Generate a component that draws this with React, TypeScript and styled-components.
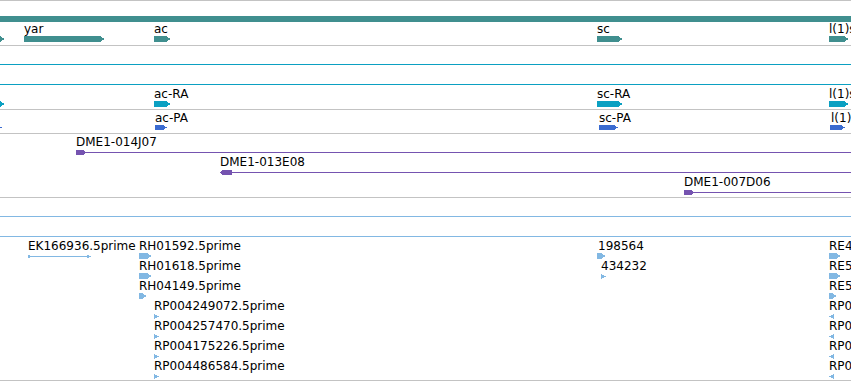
import React from 'react';
import styled, { createGlobalStyle } from 'styled-components';

const C = {
  sep: '#c3c3c3',
  teal: '#408f8f',
  cyan: '#0ba0c2',
  blue: '#3a6bd0',
  purple: '#7553b0',
  est: '#82b8e3',
};

const Global = createGlobalStyle`
  html, body { margin: 0; padding: 0; background: #fff; }
  body { font-family: "DejaVu Sans", Verdana, sans-serif; }
`;

const Viewer = styled.div`
  position: relative;
  width: 851px;
  height: 381px;
  overflow: hidden;
  box-sizing: border-box;
  background: #fff;
  border-top: 1px solid ${C.sep};
`;

const Track = styled.section<{ $pad: number }>`
  display: flex;
  flex-direction: column;
  padding-bottom: ${(p) => p.$pad}px;
  border-bottom: 1px solid ${C.sep};
`;

const Row = styled.div`
  position: relative;
  flex: none;
  height: 20px;
`;

const Feature = styled.div<{ $x: number }>`
  position: absolute;
  top: 0;
  left: ${(p) => p.$x}px;
  display: flex;
  flex-direction: column;
  align-items: flex-start;
`;

const Label = styled.span<{ $dx: number }>`
  display: block;
  height: 12px;
  margin-top: 2px;
  margin-left: ${(p) => p.$dx}px;
  font-size: 12px;
  line-height: 12px;
  color: #000;
  white-space: nowrap;
`;

const GlyphSvg = styled.svg`
  display: block;
  margin-top: 1px;
  overflow: visible;
  shape-rendering: crispEdges;
`;

type Glyph =
  | { kind: 'arrow'; w: number; h?: number; color: string }
  | { kind: 'line'; w: number; color: string }
  | { kind: 'bar'; w: number; color: string }
  | { kind: 'clone'; head: 'flat' | 'left'; color: string }
  | { kind: 'pair'; w: number; color: string }
  | { kind: 'tri'; dir: 'r' | 'l'; color: string };

type Feat = { x: number; label?: string; dx?: number; glyph: Glyph };

function GlyphView({ g }: { g: Glyph }) {
  switch (g.kind) {
    case 'arrow': {
      const h = g.h ?? 6;
      const t = h === 6 ? 5 : 4;
      const pts = `0,0 ${g.w - t},0 ${g.w},${h / 2} ${g.w - t},${h} 0,${h}`;
      return (
        <GlyphSvg width={g.w} height={6} viewBox={`0 0 ${g.w} 6`}>
          <polygon points={pts} fill={g.color} />
        </GlyphSvg>
      );
    }
    case 'bar':
      return (
        <GlyphSvg width={g.w} height={6} viewBox={`0 0 ${g.w} 6`}>
          <rect x={0} y={0} width={g.w} height={6} fill={g.color} />
        </GlyphSvg>
      );
    case 'line':
      return (
        <GlyphSvg width={g.w} height={6} viewBox={`0 0 ${g.w} 6`}>
          <rect x={0} y={3} width={g.w} height={1} fill={g.color} />
        </GlyphSvg>
      );
    case 'clone': {
      const w = 900;
      const head =
        g.head === 'flat' ? '0,1 7,1 11,3.5 7,6 0,6' : '0,3.5 3,1 12,1 12,6 3,6';
      return (
        <GlyphSvg width={w} height={6} viewBox={`0 0 ${w} 6`}>
          <rect x={2} y={3} width={w} height={1} fill={g.color} />
          <polygon points={head} fill={g.color} />
        </GlyphSvg>
      );
    }
    case 'pair':
      return (
        <GlyphSvg width={g.w} height={6} viewBox={`0 0 ${g.w} 6`}>
          <rect x={0} y={3} width={g.w} height={1} fill={g.color} />
          <polygon points="0,1.5 4,3.5 0,5.5" fill={g.color} />
          <polygon points={`${g.w - 4},1.5 ${g.w},3.5 ${g.w - 4},5.5`} fill={g.color} />
        </GlyphSvg>
      );
    case 'tri':
      return (
        <GlyphSvg width={5} height={6} viewBox="0 0 5 6">
          <polygon
            points={g.dir === 'r' ? '0,1 5,3.5 0,6' : '5,1 0,3.5 5,6'}
            fill={g.color}
          />
        </GlyphSvg>
      );
  }
}

function FeatureView({ f }: { f: Feat }) {
  return (
    <Feature $x={f.x}>
      <Label $dx={f.dx ?? 0}>{f.label ?? ''}</Label>
      <GlyphView g={f.glyph} />
    </Feature>
  );
}

type TrackDef = { name: string; pad: number; rows: Feat[][] };

const full = (color: string): Feat => ({ x: 0, glyph: { kind: 'line', w: 851, color } });

const tracks: TrackDef[] = [
  {
    name: 'genes',
    pad: 4,
    rows: [
      [{ x: 0, glyph: { kind: 'bar', w: 851, color: C.teal } }],
      [
        { x: -8, glyph: { kind: 'arrow', w: 13, color: C.teal } },
        { x: 24, label: 'yar', glyph: { kind: 'arrow', w: 81, color: C.teal } },
        { x: 154, label: 'ac', glyph: { kind: 'arrow', w: 17, color: C.teal } },
        { x: 597, label: 'sc', glyph: { kind: 'arrow', w: 26, color: C.teal } },
        { x: 829, label: 'l(1)sc', glyph: { kind: 'arrow', w: 20, color: C.teal } },
      ],
    ],
  },
  {
    name: 'transcripts',
    pad: 3,
    rows: [
      [full(C.cyan)],
      [full(C.cyan)],
      [
        { x: -8, glyph: { kind: 'arrow', w: 13, color: C.cyan } },
        { x: 154, label: 'ac-RA', glyph: { kind: 'arrow', w: 17, color: C.cyan } },
        { x: 597, label: 'sc-RA', glyph: { kind: 'arrow', w: 26, color: C.cyan } },
        { x: 829, label: 'l(1)sc-RA', glyph: { kind: 'arrow', w: 20, color: C.cyan } },
      ],
    ],
  },
  {
    name: 'proteins',
    pad: 3,
    rows: [
      [
        { x: -10, glyph: { kind: 'arrow', w: 12, h: 5, color: C.blue } },
        { x: 155, label: 'ac-PA', glyph: { kind: 'arrow', w: 12, h: 5, color: C.blue } },
        { x: 599, label: 'sc-PA', glyph: { kind: 'arrow', w: 19, h: 5, color: C.blue } },
        { x: 830, label: 'l(1)sc-PA', dx: 1, glyph: { kind: 'arrow', w: 15, h: 5, color: C.blue } },
      ],
    ],
  },
  {
    name: 'clones',
    pad: 3,
    rows: [
      [{ x: 76, label: 'DME1-014J07', glyph: { kind: 'clone', head: 'flat', color: C.purple } }],
      [{ x: 220, label: 'DME1-013E08', glyph: { kind: 'clone', head: 'left', color: C.purple } }],
      [{ x: 684, label: 'DME1-007D06', glyph: { kind: 'clone', head: 'flat', color: C.purple } }],
    ],
  },
  {
    name: 'ests',
    pad: 2,
    rows: [
      [full(C.est)],
      [full(C.est)],
      [
        { x: 28, label: 'EK166936.5prime', glyph: { kind: 'pair', w: 63, color: C.est } },
        { x: 139, label: 'RH01592.5prime', glyph: { kind: 'arrow', w: 13, color: C.est } },
        { x: 597, label: '198564', dx: 1, glyph: { kind: 'arrow', w: 9, color: C.est } },
        { x: 829, label: 'RE40441.5prime', glyph: { kind: 'arrow', w: 12, color: C.est } },
      ],
      [
        { x: 139, label: 'RH01618.5prime', glyph: { kind: 'arrow', w: 13, color: C.est } },
        { x: 601, label: '434232', glyph: { kind: 'tri', dir: 'r', color: C.est } },
        { x: 829, label: 'RE52160.5prime', glyph: { kind: 'arrow', w: 12, color: C.est } },
      ],
      [
        { x: 139, label: 'RH04149.5prime', glyph: { kind: 'arrow', w: 8, color: C.est } },
        { x: 829, label: 'RE59814.5prime', glyph: { kind: 'arrow', w: 8, color: C.est } },
      ],
      [
        { x: 154, label: 'RP004249072.5prime', glyph: { kind: 'tri', dir: 'r', color: C.est } },
        { x: 829, label: 'RP004317528.5prime', glyph: { kind: 'tri', dir: 'l', color: C.est } },
      ],
      [
        { x: 154, label: 'RP004257470.5prime', glyph: { kind: 'tri', dir: 'r', color: C.est } },
        { x: 829, label: 'RP004326015.5prime', glyph: { kind: 'tri', dir: 'l', color: C.est } },
      ],
      [
        { x: 154, label: 'RP004175226.5prime', glyph: { kind: 'tri', dir: 'r', color: C.est } },
        { x: 829, label: 'RP004288741.5prime', glyph: { kind: 'tri', dir: 'l', color: C.est } },
      ],
      [
        { x: 154, label: 'RP004486584.5prime', glyph: { kind: 'tri', dir: 'r', color: C.est } },
        { x: 829, label: 'RP004402963.5prime', glyph: { kind: 'tri', dir: 'l', color: C.est } },
      ],
    ],
  },
];

export default function App() {
  return (
    <>
      <Global />
      <Viewer>
        {tracks.map((t) => (
          <Track key={t.name} $pad={t.pad}>
            {t.rows.map((r, i) => (
              <Row key={i}>
                {r.map((f, j) => (
                  <FeatureView key={j} f={f} />
                ))}
              </Row>
            ))}
          </Track>
        ))}
      </Viewer>
    </>
  );
}
